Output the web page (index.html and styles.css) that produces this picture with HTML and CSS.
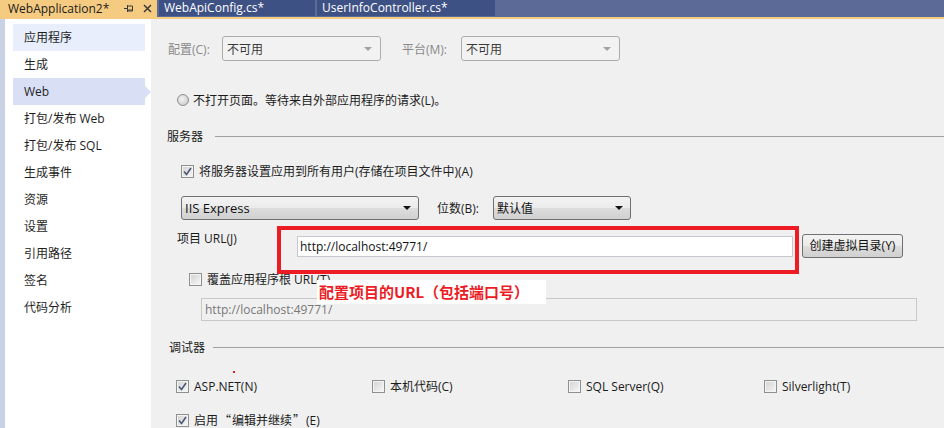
FILE: index.html
```html
<!DOCTYPE html>
<html lang="zh-CN">
<head>
<meta charset="utf-8">
<title>WebApplication2 属性</title>
<link rel="stylesheet" href="styles.css">
</head>
<body>
<div class="tabbar">
  <div class="tab active">
    <span class="tab-title">WebApplication2*</span>
    <svg class="pin" width="10" height="9" viewBox="0 0 10 9"><path d="M0 4.5H3.5M3.5 1V8M3.5 2H8.5V7H3.5M3.5 6H8.5" stroke="#3a3a3a" stroke-width="1" fill="none"/></svg>
    <svg class="close" width="9" height="9" viewBox="0 0 9 9"><path d="M1 1L8 8M8 1L1 8" stroke="#3a3a3a" stroke-width="1.5" fill="none"/></svg>
  </div>
  <div class="tab t2">WebApiConfig.cs*</div>
  <div class="tab t3">UserInfoController.cs*</div>
</div>
<div class="tabline"></div>
<div class="body">
  <nav class="side">
    <div class="item hover">应用程序</div>
    <div class="item">生成</div>
    <div class="item selected">Web</div>
    <div class="item">打包/发布 Web</div>
    <div class="item">打包/发布 SQL</div>
    <div class="item">生成事件</div>
    <div class="item">资源</div>
    <div class="item">设置</div>
    <div class="item">引用路径</div>
    <div class="item">签名</div>
    <div class="item">代码分析</div>
  </nav>
  <main class="panel">
    <div class="row config-row">
      <span class="lbl disabled w-cfg">配置(C):</span>
      <div class="select dis w-159"><span>不可用</span><i class="arrow gray"></i></div>
      <span class="lbl disabled w-plat">平台(M):</span>
      <div class="select dis w-159"><span>不可用</span><i class="arrow gray"></i></div>
    </div>
    <div class="hr"></div>
    <div class="row radio-row">
      <span class="radio"></span>
      <span class="txt">不打开页面。等待来自外部应用程序的请求(L)。</span>
    </div>
    <div class="section sec-server"><span>服务器</span><div class="line"></div></div>
    <div class="row check-row srv">
      <span class="cb checked"><svg width="9" height="9" viewBox="0 0 9 9"><path d="M1 4.5L3.5 7.5L8 1" stroke="#4a5877" stroke-width="1.6" fill="none"/></svg></span>
      <span class="txt">将服务器设置应用到所有用户(存储在项目文件中)(A)</span>
    </div>
    <div class="row iis-row">
      <div class="select btnlike w-iis"><span class="iis">IIS Express</span><i class="arrow black"></i></div>
      <span class="lbl w-bits">位数(B):</span>
      <div class="select btnlike w-def"><span>默认值</span><i class="arrow black"></i></div>
    </div>
    <div class="row url-row">
      <span class="lbl url-lbl">项目 URL(J)</span>
      <div class="redbox">
        <div class="input">http://localhost:49771/</div>
      </div>
      <div class="button">创建虚拟目录(Y)</div>
    </div>
    <div class="row check-row override">
      <span class="cb"></span>
      <span class="txt">覆盖应用程序根 URL(T)</span>
      <div class="note">配置项目的URL（包括端口号）</div>
    </div>
    <div class="input disabled-input">http://localhost:49771/</div>
    <div class="section sec-debug"><span>调试器</span><div class="line"></div></div>
    <div class="row debug-row">
      <i class="dot"></i>
      <div class="dbg"><span class="cb checked"><svg width="9" height="9" viewBox="0 0 9 9"><path d="M1 4.5L3.5 7.5L8 1" stroke="#4a5877" stroke-width="1.6" fill="none"/></svg></span><span class="txt">ASP.NET(N)</span></div>
      <div class="dbg"><span class="cb"></span><span class="txt">本机代码(C)</span></div>
      <div class="dbg"><span class="cb"></span><span class="txt">SQL Server(Q)</span></div>
      <div class="dbg"><span class="cb"></span><span class="txt">Silverlight(T)</span></div>
    </div>
    <div class="row debug-row last">
      <div class="dbg"><span class="cb checked"><svg width="9" height="9" viewBox="0 0 9 9"><path d="M1 4.5L3.5 7.5L8 1" stroke="#4a5877" stroke-width="1.6" fill="none"/></svg></span><span class="txt">启用<span class="q">“</span>编辑并继续<span class="q">”</span>(E)</span></div>
    </div>
  </main>
</div>
</body>
</html>
```

FILE: styles.css
```css
* { box-sizing: border-box; margin: 0; padding: 0; }
html, body { width: 944px; height: 428px; overflow: hidden; }
body {
  font-family: "Open Sans", "Noto Sans CJK SC", sans-serif;
  font-size: 12px;
  color: #1b1b1b;
  background: #f0f0f0;
}

/* tabs */
.tabbar {
  height: 17px;
  background: #5c6a97;
  display: flex;
  gap: 2px;
  align-items: flex-start;
}
.tab {
  height: 16px;
  line-height: 16px;
  color: #fff;
  background: #3d5185;
  white-space: nowrap;
  font-size: 12px;
}
.tab.active {
  width: 157px;
  height: 17px;
  background: #f5cb82;
  color: #1b1b1b;
  padding-left: 8px;
  display: flex;
  align-items: center;
}
.tab-title { width: 116px; }
.pin { margin-right: 9px; }
.tab.t2 { width: 156px; padding-left: 5px; }
.tab.t3 { width: 178px; padding-left: 5px; }
.tabline { height: 2px; background: #f5cb82; }

/* body */
.body { display: flex; height: 409px; }
.side {
  width: 151px;
  flex: none;
  background: #fff;
  border-left: 5px solid #c9d2e4;
  padding: 5px 0 0 8px;
}
.item {
  position: relative;
  width: 132px;
  height: 27px;
  line-height: 27px;
  padding-left: 11px;
  color: #1e1e1e;
}
.item.hover { background: #e8eefc; }
.item.selected { background: #d9dff5; }
.item.selected::after {
  content: "";
  position: absolute;
  right: -6px;
  top: 8px;
  border-left: 6px solid #d9dff5;
  border-top: 6px solid transparent;
  border-bottom: 6px solid transparent;
}

.panel {
  flex: 1;
  padding-left: 15px;
  display: flex;
  flex-direction: column;
  align-items: flex-start;
}
.row { display: flex; align-items: center; }
.lbl { white-space: nowrap; }
.disabled { color: #8a8a8a; }
.txt { white-space: nowrap; }
.q { font-family: "Noto Sans CJK SC", sans-serif; display: inline-block; width: 12px; text-align: center; margin: 0 1px; }

.config-row { margin-top: 17px; height: 25px; padding-left: 2px; }
.w-cfg { width: 54px; }
.w-plat { width: 59px; margin-left: 21px; }
.w-159 { width: 159px; }

.select {
  position: relative;
  height: 25px;
  border-radius: 3px;
  display: flex;
  align-items: center;
  padding-left: 4px;
  white-space: nowrap;
}
.select.dis {
  border: 1px solid #acacac;
  background: #f2f2f2;
  color: #3a3a3a;
}
.select.btnlike {
  height: 24px;
  border: 1px solid #707070;
  background: linear-gradient(#f3f3f3 0%, #ebebeb 50%, #dddddd 51%, #d0d0d0 100%);
  color: #111;
  padding-left: 3px;
}
.arrow {
  position: absolute;
  right: 8px;
  top: 10px;
  border-left: 4px solid transparent;
  border-right: 4px solid transparent;
  border-top: 4px solid #a3a3a3;
}
.arrow.black { border-top-color: #111; right: 7px; top: 9px; }

.hr {
  width: 778px;
  height: 1px;
  background: #a0a0a0;
  margin-top: 15px;
}

.radio-row { margin-top: 16px; height: 16px; padding-left: 11px; }
.radio {
  width: 12px; height: 12px;
  border-radius: 50%;
  border: 1px solid #8e8e8e;
  background: radial-gradient(circle at 40% 40%, #f4f4f4 0%, #d6d6d6 60%, #bdbdbd 100%);
  margin-right: 4px;
}

.section {
  display: flex;
  align-items: center;
  height: 16px;
  width: 778px;
  padding-left: 1px;
}
.section .line { flex: 1; height: 1px; background: #a0a0a0; margin-left: 12px; }
.sec-server { margin-top: 20px; }
.sec-debug { margin-top: 18px; padding-left: 3px; }
.sec-debug .line { margin-left: 8px; }

.check-row { height: 16px; }
.srv { margin-top: 19px; padding-left: 15px; }
.cb {
  width: 13px; height: 13px;
  flex: none;
  border: 1px solid #8e8f8f;
  background: linear-gradient(135deg, #d2d2d2 0%, #ececec 70%, #f8f8f8 100%);
  box-shadow: inset 0 0 0 1px #f4f4f4;
  margin-right: 5px;
  display: flex;
  align-items: center;
  justify-content: center;
}
.cb svg { display: block; }

.iis-row { margin-top: 17px; height: 24px; padding-left: 15px; }
.w-iis { width: 238px; }
.iis { font-size: 13px; }
.w-bits { margin-left: 18px; width: 56px; }
.w-def { width: 138px; }

.url-row { margin-top: 6px; height: 48px; align-items: flex-start; padding-left: 11px; }
.url-lbl { width: 100px; margin-top: 5px; line-height: 16px; }
.redbox {
  width: 522px;
  height: 48px;
  border: 4px solid #ed1c24;
  padding: 6px 2px 0 16px;
}
.input {
  height: 21px;
  background: #fff;
  border: 1px solid #c5c8cf;
  padding-left: 2px;
  line-height: 19px;
  white-space: nowrap;
  color: #111;
}
.button {
  margin-top: 8px;
  margin-left: 3px;
  width: 101px;
  height: 24px;
  border: 1px solid #707070;
  border-radius: 3px;
  background: linear-gradient(#f3f3f3 0%, #ebebeb 50%, #dddddd 51%, #d0d0d0 100%);
  text-align: center;
  line-height: 22px;
  white-space: nowrap;
  color: #111;
}

.override { position: relative; margin-top: -3px; padding-left: 23px; }
.note {
  position: absolute;
  left: 151px;
  top: 9px;
  width: 229px;
  height: 24px;
  background: #fff;
  color: #ed1c24;
  font-weight: bold;
  font-size: 15px;
  line-height: 24px;
  padding-left: 2px;
  white-space: nowrap;
  font-family: "Noto Sans CJK SC", sans-serif;
}

.disabled-input {
  margin-top: 11px;
  margin-left: 35px;
  width: 716px;
  height: 23px;
  background: #f0f0f0;
  border-color: #c8c8c8;
  color: #777;
  line-height: 21px;
  padding-left: 3px;
}

.debug-row { position: relative; margin-top: 23px; height: 16px; padding-left: 10px; }
.debug-row.last { margin-top: 18px; }
.dbg { width: 196px; display: flex; align-items: center; }
.dot {
  position: absolute;
  left: 67px;
  top: -7px;
  width: 2px;
  height: 2px;
  background: #e02020;
}
```
